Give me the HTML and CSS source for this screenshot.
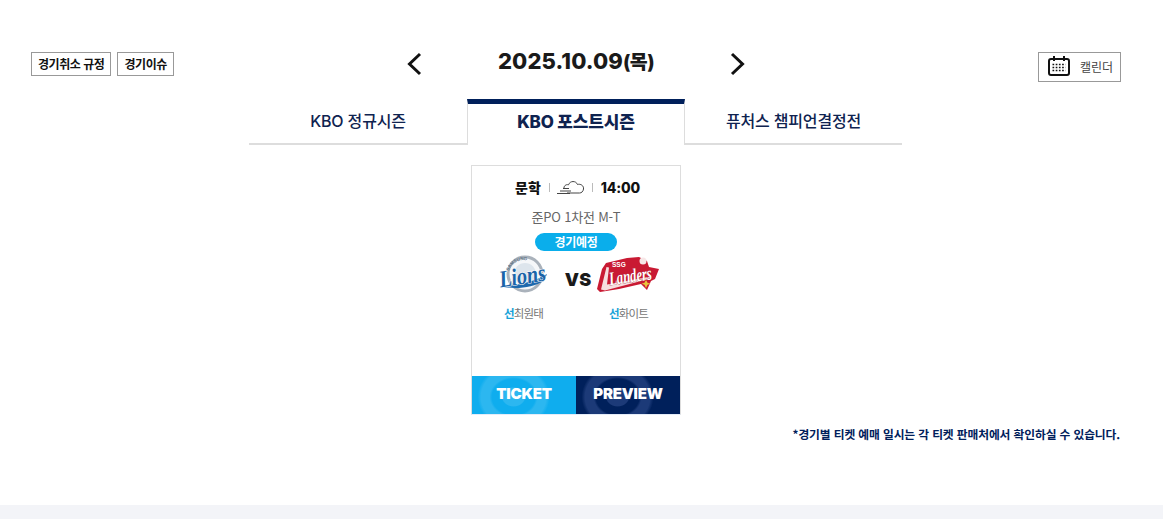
FILE: index.html
```html
<!DOCTYPE html>
<html lang="ko">
<head>
<meta charset="utf-8">
<title>경기일정</title>
<link rel="stylesheet" href="styles.css">
</head>
<body>
<main class="page">
  <header class="topbar">
    <div class="rules">
      <a class="rule-btn">경기취소 규정</a>
      <a class="rule-btn">경기이슈</a>
    </div>
    <div class="date-nav">
      <svg class="arrow" width="16" height="26" viewBox="0 0 16 26"><path d="M14 3 3.500 13 14 23" fill="none" stroke="#111" stroke-width="3"/></svg>
      <h1 class="date">2025.10.09<span class="weekday">(목)</span></h1>
      <svg class="arrow" width="16" height="26" viewBox="0 0 16 26"><path d="M2 3 12.500 13 2 23" fill="none" stroke="#111" stroke-width="3"/></svg>
    </div>
    <a class="cal-btn">
      <svg width="22" height="20" viewBox="0 0 22 20">
        <rect x="1" y="3" width="20" height="16" rx="2" fill="none" stroke="#111" stroke-width="2"/>
        <path d="M6 0v5M16 0v5" stroke="#111" stroke-width="2"/>
        <path d="M4.500 8.500h13M4.500 11.500h13M4.500 14.500h13" stroke="#111" stroke-width="1.600" stroke-dasharray="1.700 1.500"/>
      </svg>
      <span>캘린더</span>
    </a>
  </header>

  <nav class="tabs">
    <a class="tab">KBO 정규시즌</a>
    <a class="tab tab-active">KBO 포스트시즌</a>
    <a class="tab">퓨처스 챔피언결정전</a>
  </nav>

  <section class="games">
    <article class="card">
      <div class="card-body">
        <div class="meta">
          <span class="place">문학</span>
          <i class="sep"></i>
          <svg class="weather" width="28" height="16" viewBox="0 0 28 16">
            <path d="M7 10c-.5-3 2-5 4.500-4.200C13 1.500 19 1.500 20.500 5.500c3-1 6.500 1.200 6 4.500-.3 2.500-2 4-4 4H10" fill="none" stroke="#444" stroke-width="1"/>
            <path d="M0 14.500h13M3 12h11M6 9.500h6" stroke="#444" stroke-width="1" fill="none"/>
          </svg>
          <i class="sep"></i>
          <span class="time">14:00</span>
        </div>
        <p class="round">준PO 1차전 M-T</p>
        <span class="status">경기예정</span>
        <div class="teams">
          <svg class="logo" width="54" height="40" viewBox="0 0 54 40">
            <defs>
              <path id="lions-arc-top" d="M12 21a16 16 0 0 1 32 0"/>
            </defs>
            <circle cx="29" cy="19" r="17" fill="#f5f7f9" stroke="#aab2bb" stroke-width="3"/>
            <circle cx="29" cy="19" r="11" fill="#dde5ec"/>
            <text class="logo-arc"><textPath href="#lions-arc-top" startOffset="10%">SAMSUNG</textPath></text>
            <path d="M4 31C18 31 36 28 51 19l-3 7C36 33 18 35 4 31Z" fill="#1d69ad"/>
            <text x="3" y="29" class="logo-lions" textLength="47" lengthAdjust="spacingAndGlyphs" transform="rotate(-9 26 22)">Lions</text>
          </svg>
          <span class="vs">VS</span>
          <svg class="logo" width="64" height="40" viewBox="0 0 64 40">
            <path d="M9 8 30 3l12-1 8 4 2 6 10 2-4 10-4 2-4 9-6-6-22 5-19 3-3-3 5-20Z" fill="#c91a33"/>
            <path d="M4 34.500 9.500 12l2.500.500-2 17 44-8-.5 2L8 35.500Z" fill="#f6dfdf"/>
            <text x="12" y="27" class="logo-landers" textLength="43" lengthAdjust="spacingAndGlyphs" transform="rotate(-8 36 22)">Landers</text>
            <text x="15" y="12" class="logo-ssg">SSG</text>
            <circle cx="46" cy="6" r="3.500" fill="#f7e7e7"/>
            <path d="m49 25 1.500 2.800 3 1-3 1L49 33l-1.500-3.200-3-1 3-1Z" fill="#e8c63a"/>
          </svg>
        </div>
        <div class="pitchers">
          <span class="pitcher"><b>선</b>최원태</span>
          <span class="pitcher"><b>선</b>화이트</span>
        </div>
      </div>
      <div class="actions">
        <a class="action action-ticket">TICKET</a>
        <a class="action action-preview">PREVIEW</a>
      </div>
    </article>
  </section>

  <p class="note">*경기별 티켓 예매 일시는 각 티켓 판매처에서 확인하실 수 있습니다.</p>
</main>
<footer class="footer"></footer>
</body>
</html>
```
FILE: styles.css
```css
* { box-sizing: border-box; }
html, body { margin: 0; padding: 0; }
body {
  height: 519px;
  overflow: hidden;
  display: flex;
  flex-direction: column;
  background: #fff;
  font-family: "Noto Sans CJK KR", "Noto Sans", sans-serif;
  color: #111;
}
.page { flex: 1; padding: 47px 42px 0 31px; }

.topbar {
  display: grid;
  grid-template-columns: 1fr auto 1fr;
  align-items: start;
  height: 52px;
}
.rules { display: flex; gap: 6px; padding-top: 5px; }
.rule-btn {
  height: 24px;
  padding: 0 6px;
  border: 1px solid #999;
  font-size: 12px;
  font-weight: 700;
  line-height: 21px;
  color: #111;
  letter-spacing: -0.45px;
}
.date-nav { display: flex; align-items: center; gap: 76px; height: 30px; }
.arrow { display: block; margin-top: 3px; }
.date {
  margin: -2px 0 0;
  font-family: Inter, "Noto Sans CJK KR", sans-serif;
  font-size: 22px;
  font-weight: 800;
  line-height: 30px;
  color: #1a1a1a;
  letter-spacing: 0.1px;
}
.weekday { font-size: 19.500px; letter-spacing: -0.6px; }
.cal-btn {
  justify-self: end;
  display: flex;
  align-items: center;
  gap: 10px;
  height: 30px;
  margin-top: 5px;
  padding: 0 7px 2px 9px;
  border: 1px solid #999;
  font-size: 12px;
  color: #444;
}

.tabs { display: grid; grid-template-columns: 218px 218px 217px; width: 653px; margin: 0 0 0 218px; }
.tab {
  height: 46px;
  padding-top: 11px;
  border-bottom: 2px solid #ddd;
  font-family: Inter, "Noto Sans CJK KR", sans-serif;
  font-size: 16px;
  font-weight: 500;
  line-height: 22px;
  text-align: center;
  color: #0f2350;
  letter-spacing: -0.15px;
}
.tab-active {
  border-top: 5px solid #00205b;
  border-left: 1px solid #ddd;
  border-right: 1px solid #ddd;
  border-bottom: 0;
  padding-top: 7px;
  font-size: 17px;
  font-weight: 800;
}

.games { display: flex; justify-content: center; margin-top: 20px; }
.card {
  width: 210px;
  height: 250px;
  display: flex;
  flex-direction: column;
  border: 1px solid #ddd;
  border-bottom-color: #e4ecf8;
}
.card-body { flex: 1; display: flex; flex-direction: column; align-items: center; padding-top: 11px; }
.meta { display: flex; align-items: center; height: 20px; margin-left: 3px; }
.place { font-size: 14px; font-weight: 900; color: #111; }
.sep { display: block; width: 1px; height: 9px; margin: 0 8px; background: #bbb; }
.weather { margin: 0 -1px; }
.time { font-family: Inter, sans-serif; font-size: 14px; font-weight: 800; color: #111; letter-spacing: -0.2px; }
.round { margin: 10px 0 0; font-size: 13px; line-height: 20px; color: #666; letter-spacing: -0.2px; }
.status {
  width: 82px;
  height: 18px;
  margin-top: 6px;
  border-radius: 9px;
  background: #0aaeeb;
  color: #fff;
  font-size: 12px;
  font-weight: 700;
  line-height: 18px;
  text-align: center;
  letter-spacing: -0.3px;
}
.teams { display: flex; align-items: center; height: 44px; width: 100%; padding-left: 24px; margin-top: 2px; }
.logo { display: block; flex: none; overflow: visible; }
.vs { width: 48px; margin-left: 4px; padding-top: 8px; font-family: Inter, sans-serif; font-size: 18px; font-weight: 900; text-align: center; color: #1a1a1a; }
.teams .logo:last-child { margin-left: -5px; }
.logo-arc { font-family: "Liberation Sans", sans-serif; font-size: 4.500px; font-weight: 700; fill: #5f7286; }
.logo-lions { font-family: "Liberation Serif", serif; font-size: 24px; font-weight: 700; font-style: italic; fill: #1a64a8; stroke: #fff; stroke-width: 1px; paint-order: stroke; }
.logo-landers { font-family: "Liberation Serif", serif; font-size: 19px; font-weight: 700; font-style: italic; fill: #fff; stroke: #a30f25; stroke-width: 0.6px; paint-order: stroke; }
.logo-ssg { font-family: "Liberation Sans", sans-serif; font-size: 6.500px; font-weight: 700; fill: #fff; }
.pitchers { display: flex; width: 100%; margin-top: 7px; padding-left: 32px; gap: 67px; }
.pitcher { width: 38px; font-size: 11.500px; line-height: 18px; color: #777; letter-spacing: -0.8px; white-space: nowrap; }
.pitcher b { font-weight: 700; color: #17a2d8; }

.actions { display: flex; height: 38px; }
.action {
  flex: 1;
  font-family: Inter, sans-serif;
  font-size: 15px;
  font-weight: 900;
  line-height: 36px;
  text-align: center;
  color: #fff;
  letter-spacing: -0.2px;
}
.action-ticket {
  background:
    radial-gradient(ellipse 12px 10px at 40% 55%, #2cb7f0 90%, transparent 100%),
    radial-gradient(ellipse 24px 20px at 40% 55%, #0fadee 90%, transparent 100%),
    radial-gradient(ellipse 36px 32px at 40% 55%, #2cb7f0 90%, transparent 100%),
    #0fadee;
}
.action-preview {
  background:
    radial-gradient(ellipse 12px 10px at 40% 55%, #1c3a78 90%, transparent 100%),
    radial-gradient(ellipse 24px 20px at 40% 55%, #00205b 90%, transparent 100%),
    radial-gradient(ellipse 36px 32px at 40% 55%, #1c3a78 90%, transparent 100%),
    #00205b;
}

.note {
  margin: 10px 0 0;
  padding-right: 1px;
  font-size: 11.750px;
  font-weight: 700;
  line-height: 18px;
  text-align: right;
  color: #00205b;
  letter-spacing: -0.1px;
}
.footer { height: 14px; background: #f3f4f8; }
```
